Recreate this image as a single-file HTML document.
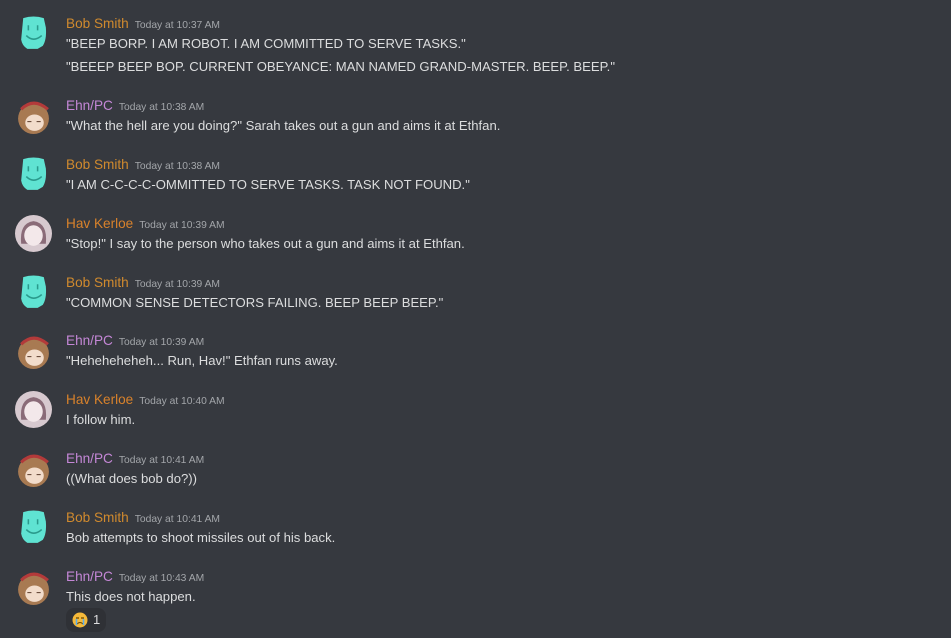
<!DOCTYPE html>
<html><head><meta charset="utf-8"><style>
body{margin:0;width:951px;height:638px;background:#36393f;overflow:hidden;font-family:"Liberation Sans",sans-serif;position:relative}
.m{position:absolute;left:0;width:951px}
.av{position:absolute;left:15px;top:-10px;width:37px;height:37px}
.n{position:absolute;left:66px;top:-9px;font-size:13.6px;font-weight:500;white-space:nowrap}
.n span{color:#a3a6aa;font-size:10.3px;margin-left:6px;font-weight:400}
.t{position:absolute;left:66px;font-size:13.1px;color:#dcddde;white-space:nowrap}
.bob{color:#d08a2e}.ehn{color:#c487d6}.hav{color:#d9822b}
.rx{position:absolute;left:66px;top:8px;width:40px;height:24px;background:#2f3136;border-radius:8px;color:#dcddde;font-size:13px}
</style></head><body>
<svg width="0" height="0" style="position:absolute"><defs>
<g id="bob"><path d="M8 3 Q18 0 28 3 L30 12 Q31 24 27 30 L22 33 L12 33 Q7 30 6 24 Z" fill="#5fe3d2"/><path d="M13 10v5M22 10v5M11 20 Q18 27 26 20" stroke="#2a9a8c" stroke-width="1.5" fill="none"/></g>
<g id="ehn"><circle cx="18" cy="21" r="15" fill="#a87a52"/><path d="M6 12 Q18 0 32 12" stroke="#b33a3a" stroke-width="3" fill="none"/><ellipse cx="19" cy="25" rx="9" ry="8" fill="#f2dccb"/><path d="M12 24h4M21 24h4" stroke="#5a3a2a"/></g>
<g id="hav"><circle cx="18" cy="18" r="18" fill="#d7c9cf"/><path d="M6 28 Q4 8 18 6 Q32 8 30 28" fill="#8a6b78"/><ellipse cx="18" cy="20" rx="9" ry="10" fill="#f3e8ea"/></g>
</defs></svg>

<div class="m" style="top:25px"><svg class="av" viewBox="0 0 36 36"><use href="#bob"/></svg><div class="n bob">Bob Smith<span>Today at 10:37 AM</span></div><div class="t" style="top:11px">"BEEP BORP. I AM ROBOT. I AM COMMITTED TO SERVE TASKS."</div><div class="t" style="top:34px">"BEEEP BEEP BOP. CURRENT OBEYANCE: MAN NAMED GRAND-MASTER. BEEP. BEEP."</div></div>

<div class="m" style="top:107px"><svg class="av" viewBox="0 0 36 36"><use href="#ehn"/></svg><div class="n ehn">Ehn/PC<span>Today at 10:38 AM</span></div><div class="t" style="top:11px">"What the hell are you doing?" Sarah takes out a gun and aims it at Ethfan.</div></div>

<div class="m" style="top:166px"><svg class="av" viewBox="0 0 36 36"><use href="#bob"/></svg><div class="n bob">Bob Smith<span>Today at 10:38 AM</span></div><div class="t" style="top:11px">"I AM C-C-C-C-OMMITTED TO SERVE TASKS. TASK NOT FOUND."</div></div>

<div class="m" style="top:225px"><svg class="av" viewBox="0 0 36 36"><use href="#hav"/></svg><div class="n hav">Hav Kerloe<span>Today at 10:39 AM</span></div><div class="t" style="top:11px">"Stop!" I say to the person who takes out a gun and aims it at Ethfan.</div></div>

<div class="m" style="top:284px"><svg class="av" viewBox="0 0 36 36"><use href="#bob"/></svg><div class="n bob">Bob Smith<span>Today at 10:39 AM</span></div><div class="t" style="top:11px">"COMMON SENSE DETECTORS FAILING. BEEP BEEP BEEP."</div></div>

<div class="m" style="top:342px"><svg class="av" viewBox="0 0 36 36"><use href="#ehn"/></svg><div class="n ehn">Ehn/PC<span>Today at 10:39 AM</span></div><div class="t" style="top:11px">"Heheheheheh... Run, Hav!" Ethfan runs away.</div></div>

<div class="m" style="top:401px"><svg class="av" viewBox="0 0 36 36"><use href="#hav"/></svg><div class="n hav">Hav Kerloe<span>Today at 10:40 AM</span></div><div class="t" style="top:11px">I follow him.</div></div>

<div class="m" style="top:460px"><svg class="av" viewBox="0 0 36 36"><use href="#ehn"/></svg><div class="n ehn">Ehn/PC<span>Today at 10:41 AM</span></div><div class="t" style="top:11px">((What does bob do?))</div></div>

<div class="m" style="top:519px"><svg class="av" viewBox="0 0 36 36"><use href="#bob"/></svg><div class="n bob">Bob Smith<span>Today at 10:41 AM</span></div><div class="t" style="top:11px">Bob attempts to shoot missiles out of his back.</div></div>

<div class="m" style="top:578px"><svg class="av" viewBox="0 0 36 36"><use href="#ehn"/></svg><div class="n ehn">Ehn/PC<span>Today at 10:43 AM</span></div><div class="t" style="top:11px">This does not happen.</div>
<div class="rx" style="top:30px"><svg width="16" height="16" style="position:absolute;left:6px;top:4px" viewBox="0 0 16 16"><circle cx="8" cy="8" r="7.5" fill="#f5b93a"/><path d="M4 6h3M9 6h3" stroke="#664500" stroke-width="1.2"/><path d="M5 12 Q8 9 11 12" stroke="#664500" fill="none"/><path d="M4.5 7v6M11.5 7v6" stroke="#5dadec" stroke-width="1.5"/></svg><span style="position:absolute;left:27px;top:4px">1</span></div></div>
</body></html>
